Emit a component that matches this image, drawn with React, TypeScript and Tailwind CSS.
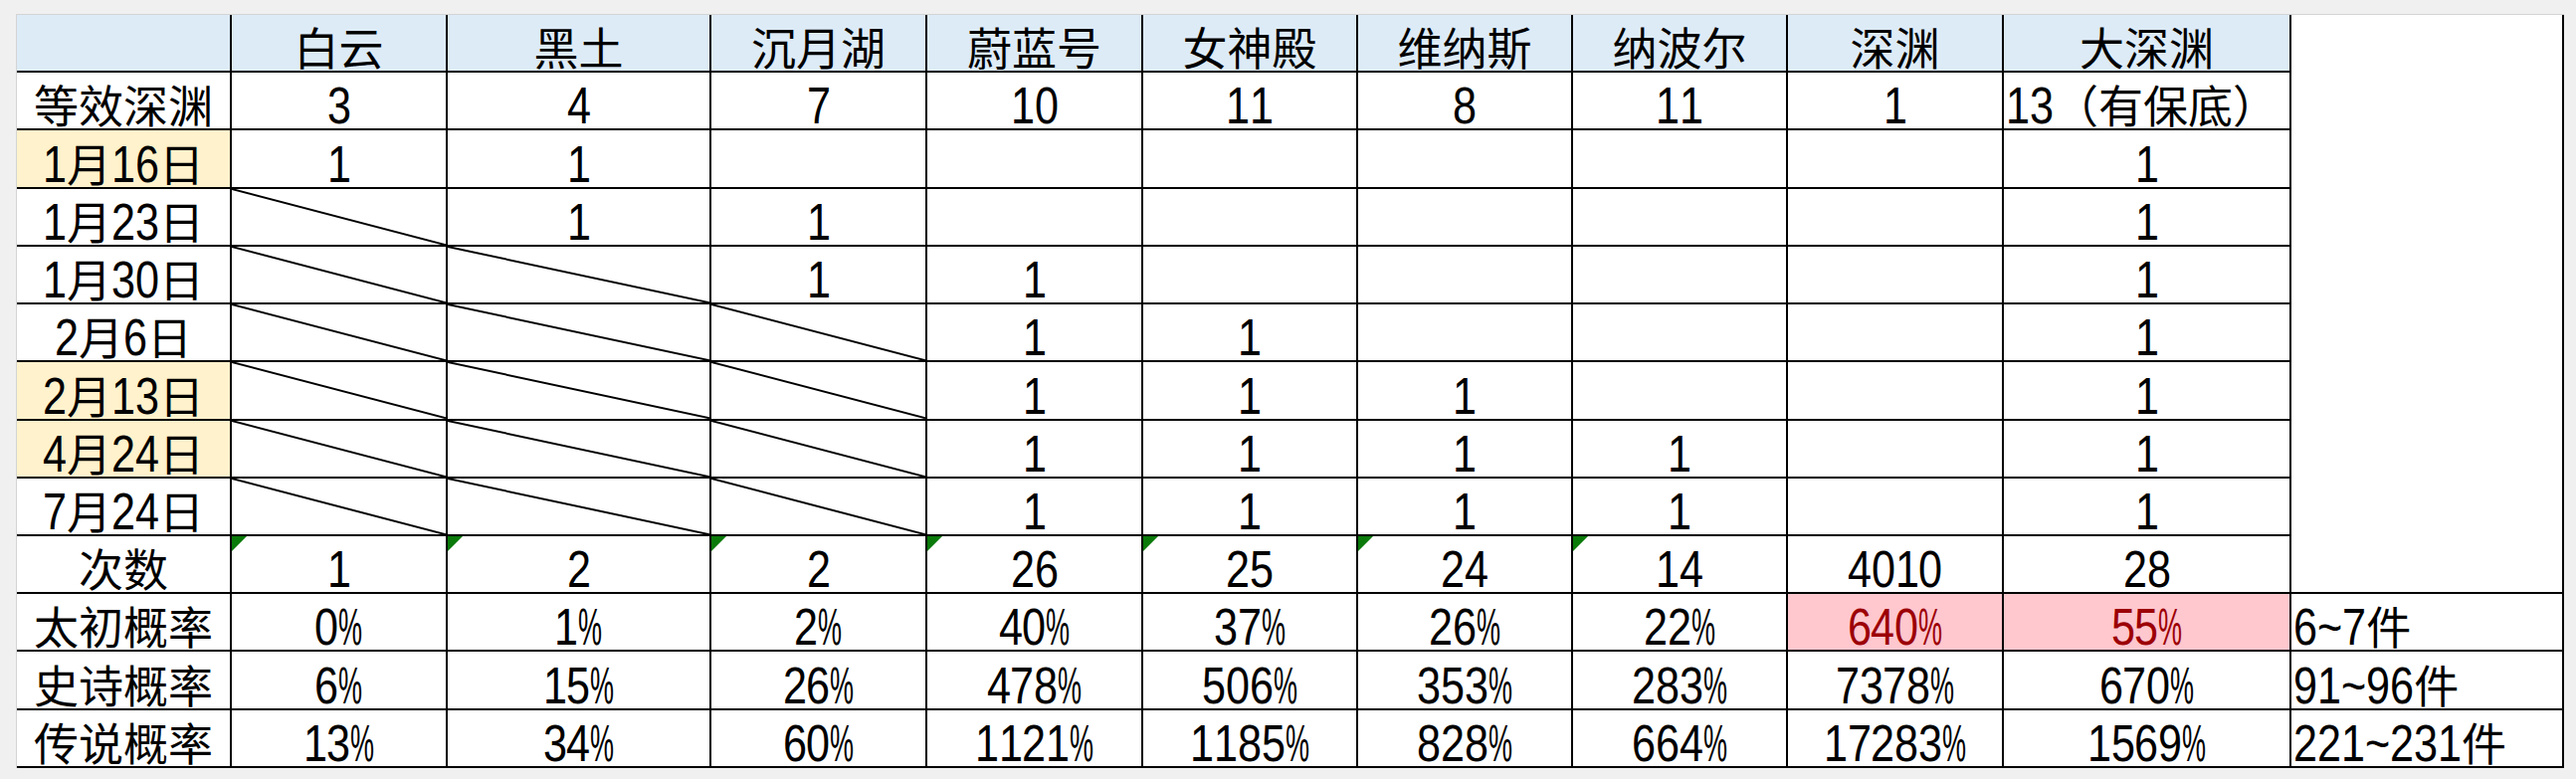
import React from 'react';

const cols = ['白云', '黑土', '沉月湖', '蔚蓝号', '女神殿', '维纳斯', '纳波尔', '深渊', '大深渊'];

// 'x' = 斜线（该期不可刷），'1' = 有，'' = 空
const dates: { label: string; hl?: boolean; cells: string[] }[] = [
  { label: '1月16日', hl: true, cells: ['1', '1', '', '', '', '', '', '', '1'] },
  { label: '1月23日', cells: ['x', '1', '1', '', '', '', '', '', '1'] },
  { label: '1月30日', cells: ['x', 'x', '1', '1', '', '', '', '', '1'] },
  { label: '2月6日', cells: ['x', 'x', 'x', '1', '1', '', '', '', '1'] },
  { label: '2月13日', hl: true, cells: ['x', 'x', 'x', '1', '1', '1', '', '', '1'] },
  { label: '4月24日', hl: true, cells: ['x', 'x', 'x', '1', '1', '1', '1', '', '1'] },
  { label: '7月24日', cells: ['x', 'x', 'x', '1', '1', '1', '1', '', '1'] },
];

const equiv = ['3', '4', '7', '10', '11', '8', '11', '1', '13（有保底）'];
const counts = ['1', '2', '2', '26', '25', '24', '14', '4010', '28'];

const probs = [
  { label: '太初概率', vals: ['0%', '1%', '2%', '40%', '37%', '26%', '22%', '640%', '55%'], note: '6~7件', pink: true },
  { label: '史诗概率', vals: ['6%', '15%', '26%', '478%', '506%', '353%', '283%', '7378%', '670%'], note: '91~96件' },
  { label: '传说概率', vals: ['13%', '34%', '60%', '1121%', '1185%', '828%', '664%', '17283%', '1569%'], note: '221~231件' },
];

const CJK = /([\u3000-\u303f\u4e00-\u9fff\uff00-\uffef]+)/;

// 数字用窄体：Liberation Sans 52px 的字宽 × 压缩比
const FS = 52;
const adv: Record<string, number> = { '%': 0.889, '~': 0.584, ' ': 0.278 };

function Narrow({ ch }: { ch: string }) {
  const pct = ch === '%';
  const a = adv[ch] ?? 0.556;
  const w = a * FS * (pct ? 0.52 : 0.83);
  return (
    <span className="inline-block" style={{ width: w }}>
      <span className={`inline-block origin-left ${pct ? 'scale-x-[0.52]' : 'scale-x-[0.83]'}`}>{ch}</span>
    </span>
  );
}

function Txt({ s }: { s: string }) {
  return (
    <span className="-mb-[3px] whitespace-nowrap">
      {s.split(CJK).map((part, i) =>
        CJK.test(part) ? (
          <span key={i} className="font-['Noto_Sans_CJK_SC',sans-serif] text-[45px]">
            {part}
          </span>
        ) : (
          part.split('').map((ch, j) => <Narrow key={`${i}-${j}`} ch={ch} />)
        ),
      )}
    </span>
  );
}

function Cell({
  children,
  className = '',
  left = false,
}: {
  children?: React.ReactNode;
  className?: string;
  left?: boolean;
}) {
  return (
    <div
      className={`relative flex items-end border-r-2 border-b-2 border-black leading-none ${
        left ? 'justify-start pl-[2px]' : 'justify-center'
      } ${className}`}
    >
      {children}
    </div>
  );
}

function Slash() {
  return (
    <svg className="absolute inset-0 h-full w-full" viewBox="0 0 100 100" preserveAspectRatio="none">
      <line x1="0" y1="0" x2="100" y2="100" stroke="#000" strokeWidth="2" vectorEffect="non-scaling-stroke" />
    </svg>
  );
}

function Flag() {
  return (
    <svg className="absolute left-0 top-0 h-[15px] w-[15px]" viewBox="0 0 15 15">
      <polygon points="0,0 15,0 0,15" fill="#0a7a0a" />
    </svg>
  );
}

export default function App() {
  return (
    <div className="min-h-screen w-full bg-[#f0f0f0] pl-[16px] pt-[14px] font-['Liberation_Sans',sans-serif] text-[52px] text-black">
      <div className="grid w-max grid-cols-[216px_217px_265px_217px_217px_216px_216px_216px_217px_289px_274px] grid-rows-[repeat(13,58.23px)] border-l border-t border-[#d4d4d4] bg-white">
        {/* 表头 */}
        <Cell className="bg-[#ddebf7]" />
        {cols.map((c) => (
          <Cell key={c} className="bg-[#ddebf7]">
            <Txt s={c} />
          </Cell>
        ))}
        <div className="row-span-10 border-r-2 border-b-2 border-black bg-white" />

        {/* 等效深渊 */}
        <Cell>
          <Txt s="等效深渊" />
        </Cell>
        {equiv.map((v, i) => (
          <Cell key={i} left={i === 8}>
            <Txt s={v} />
          </Cell>
        ))}

        {/* 日期 */}
        {dates.map((d) => (
          <React.Fragment key={d.label}>
            <Cell className={d.hl ? 'bg-[#fff2cc]' : ''}>
              <Txt s={d.label} />
            </Cell>
            {d.cells.map((v, i) => (
              <Cell key={i}>{v === 'x' ? <Slash /> : v && <Txt s={v} />}</Cell>
            ))}
          </React.Fragment>
        ))}

        {/* 次数 */}
        <Cell>
          <Txt s="次数" />
        </Cell>
        {counts.map((v, i) => (
          <Cell key={i}>
            {i < 7 && <Flag />}
            <Txt s={v} />
          </Cell>
        ))}

        {/* 概率 */}
        {probs.map((p) => (
          <React.Fragment key={p.label}>
            <Cell>
              <Txt s={p.label} />
            </Cell>
            {p.vals.map((v, i) => (
              <Cell key={i} className={p.pink && i >= 7 ? 'bg-[#ffc7ce] text-[#9c0006]' : ''}>
                <Txt s={v} />
              </Cell>
            ))}
            <Cell left>
              <Txt s={p.note} />
            </Cell>
          </React.Fragment>
        ))}
      </div>
    </div>
  );
}
